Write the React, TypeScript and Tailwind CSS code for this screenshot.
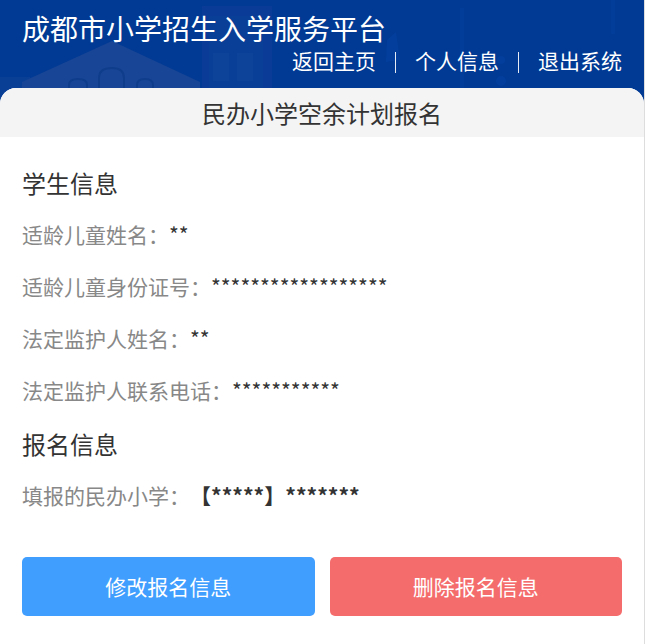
import React from "react";

function Backdrop() {
  return (
    <svg className="absolute inset-y-0 left-0 h-full w-[644px]" viewBox="0 0 644 104" preserveAspectRatio="none" aria-hidden="true">
      <rect x="0" y="77" width="30" height="27" fill="#0a3f96" />
      <path d="M22 82 L112 41 L200 82 V104 H22 Z" fill="#184595" />
      <rect x="202" y="6" width="70" height="98" fill="#0a3c97" />
      <rect x="209" y="16" width="54" height="88" fill="#0a3f98" />
      <g fill="#0d449a">
        <rect x="213" y="53" width="16" height="28" />
        <rect x="237" y="53" width="16" height="28" />
      </g>
      <g fill="none" stroke="#0f3d8c" strokeWidth="2">
        <path d="M69 90 V85 Q69 79 78 79 Q87 79 87 85 V90" />
        <path d="M99 90 V78 Q99 68 112 68 Q124 68 124 78 V90" />
        <path d="M137 90 V85 Q137 79 145 79 Q153 79 153 85 V90" />
      </g>
      <g fill="#04409f">
        <rect x="460" y="8" width="4" height="80" opacity=".5" />
        <rect x="611" y="0" width="4" height="34" opacity=".5" />
        <circle cx="501" cy="60" r="4" opacity=".8" />
        <circle cx="501" cy="81" r="5" opacity=".8" />
        <path d="M387 40 L396 32 L400 60 L386 62 Z" opacity=".8" />
      </g>
    </svg>
  );
}

const links = ["返回主页", "个人信息", "退出系统"];

function Row({ label, value, bold = false }: { label: string; value: string; bold?: boolean }) {
  return (
    <div className="flex h-[52px] items-center text-[21px]">
      <dt className="text-[#888888]">{label}：</dt>
      <dd className={bold ? "font-bold" : ""}>{value}</dd>
    </div>
  );
}

function Heading({ children }: { children: React.ReactNode }) {
  return <h3 className="flex h-[53px] items-center text-[24px]">{children}</h3>;
}

export default function App() {
  return (
    <div className="min-h-screen border-r border-[#dddddd] bg-white font-['Noto_Sans_CJK_SC',sans-serif] text-[#333333]">
      <header className="relative h-[104px] overflow-hidden bg-[#003a94] font-['Liberation_Sans','Noto_Sans_CJK_SC',sans-serif] text-white">
        <Backdrop />
        <div className="relative px-[22px] pt-[15px]">
          <h1 className="text-[28px] leading-[32px]">成都市小学招生入学服务平台</h1>
          <nav className="flex items-center justify-end text-[21px] leading-[30px]">
            {links.map((text, i) => (
              <React.Fragment key={text}>
                {i > 0 && <span className="mx-[19px] h-[21px] w-px bg-white/90" />}
                <a href="#">{text}</a>
              </React.Fragment>
            ))}
          </nav>
        </div>
      </header>
      <main className="relative -mt-4 overflow-hidden rounded-t-[16px] bg-white">
        <h2 className="bg-[#f4f4f4] text-center text-[24px] leading-[49px]">民办小学空余计划报名</h2>
        <div className="px-[22px] pt-[19px]">
          <Heading>学生信息</Heading>
          <dl>
            <Row label="适龄儿童姓名" value="**" />
            <Row label="适龄儿童身份证号" value="******************" />
            <Row label="法定监护人姓名" value="**" />
            <Row label="法定监护人联系电话" value="***********" />
          </dl>
          <Heading>报名信息</Heading>
          <dl>
            <Row label="填报的民办小学" value="【*****】*******" bold />
          </dl>
          <div className="flex gap-[15px] pt-[35px] text-[21px] text-white">
            <button type="button" className="h-[59px] flex-1 rounded-[5px] bg-[#409eff]">修改报名信息</button>
            <button type="button" className="h-[59px] flex-1 rounded-[5px] bg-[#f56c6c]">删除报名信息</button>
          </div>
        </div>
      </main>
    </div>
  );
}
